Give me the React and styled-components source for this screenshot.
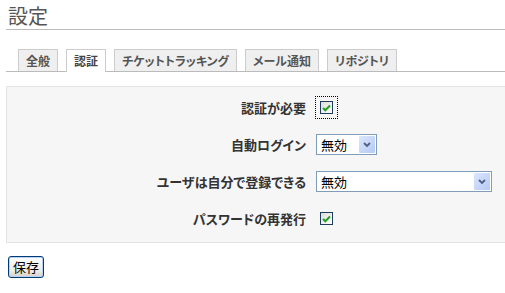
import React from "react";
import styled, { createGlobalStyle } from "styled-components";

const GlobalStyle = createGlobalStyle`
	body {
		margin: 0;
		background: #fff;
		font-family: "Noto Sans CJK JP", "DejaVu Sans", sans-serif;
		font-feature-settings: "palt";
		color: #333;
	}
`;

const Page = styled.div`
	padding: 4px 0 0 6px;
	overflow: hidden;
`;

const Title = styled.h2`
	margin: 0;
	padding: 0 0 1px 2px;
	font-size: 20px;
	line-height: 24px;
	font-weight: normal;
	color: #555;
	border-bottom: 1px solid #bbb;
`;

const TabList = styled.ul`
	display: flex;
	gap: 8px;
	list-style: none;
	margin: 19px 0 0 0;
	padding: 0 0 0 12px;
	border-bottom: 1px solid #bbb;
`;

const Tab = styled.li`
	height: 21px;
	padding: 0 7px;
	border: 1px solid #ccc;
	border-bottom: none;
	background: ${(p) => (p.$active ? "#fff" : "#efefef")};
	color: ${(p) => (p.$active ? "#444" : "#555")};
	font-size: 12px;
	font-weight: bold;
	line-height: 21px;
	margin-bottom: -1px;
	${(p) => p.$active && "padding-bottom: 1px;"}
`;

const Box = styled.div`
	margin: 14px -2px 0 0;
	padding: 2px 0 5px;
	background: #f6f6f6;
	border: 1px solid #e4e4e4;
`;

const Row = styled.div`
	display: grid;
	grid-template-columns: 299px 1fr;
	column-gap: 10px;
	align-items: center;
	height: 37px;
`;

const Label = styled.label`
	text-align: right;
	font-size: 13px;
	font-weight: bold;
	color: #333;
`;

const Control = styled.div`
	display: flex;
	align-items: center;
`;

const CheckWrap = styled.span`
	display: inline-flex;
	padding: 4px;
	outline: ${(p) => (p.$focused ? "1px dotted #000" : "none")};
`;

const CheckBox = styled.span`
	display: inline-flex;
	align-items: center;
	justify-content: center;
	width: 11px;
	height: 11px;
	border: 1px solid #1c3e5c;
	background: linear-gradient(135deg, #dcdcd7, #fff);
`;

const Select = styled.div`
	display: flex;
	align-items: center;
	justify-content: space-between;
	box-sizing: border-box;
	width: ${(p) => p.$width}px;
	height: 21px;
	border: 1px solid #7f9db9;
	background: #fff;
	padding: 1px;
	font-size: 13px;
	color: #000;
`;

const SelectText = styled.span`
	padding-left: 3px;
	line-height: 17px;
`;

const ArrowButton = styled.span`
	display: flex;
	align-items: center;
	justify-content: center;
	width: 16px;
	height: 17px;
	background: linear-gradient(135deg, #dbe6fd, #b5c9f6);
	border-radius: 1px;
`;

const SaveButton = styled.button`
	margin: 13px 0 0 2px;
	height: 22px;
	padding: 0 4px;
	font-family: "Noto Sans CJK JP", sans-serif;
	font-size: 13px;
	line-height: 18px;
	color: #000;
	border: 1px solid #003c74;
	border-radius: 3px;
	background: linear-gradient(#ffffff, #ecebe6 70%, #d6d0c5);
	box-shadow: inset 0 0 0 1px #b9d1f7;
`;

const Check = () => (
	<svg width="9" height="8" viewBox="0 0 9 8">
		<path d="M1 4 L3.3 6.3 L8 1.5" fill="none" stroke="#21a121" strokeWidth="2" />
	</svg>
);

const Chevron = () => (
	<svg width="8" height="6" viewBox="0 0 8 6">
		<path d="M1 1 L4 4 L7 1" fill="none" stroke="#4d6185" strokeWidth="1.8" />
	</svg>
);

const Checkbox = ({ focused }) => (
	<CheckWrap $focused={focused}>
		<CheckBox>
			<Check />
		</CheckBox>
	</CheckWrap>
);

const Dropdown = ({ width, value }) => (
	<Select $width={width}>
		<SelectText>{value}</SelectText>
		<ArrowButton>
			<Chevron />
		</ArrowButton>
	</Select>
);

const tabs = ["全般", "認証", "チケットトラッキング", "メール通知", "リポジトリ"];

const App = () => (
	<>
		<GlobalStyle />
		<Page>
			<Title>設定</Title>
			<TabList>
				{tabs.map((t) => (
					<Tab key={t} $active={t === "認証"}>
						{t}
					</Tab>
				))}
			</TabList>
			<Box>
				<Row>
					<Label>認証が必要</Label>
					<Control>
						<Checkbox focused />
					</Control>
				</Row>
				<Row>
					<Label>自動ログイン</Label>
					<Control>
						<Dropdown width={61} value="無効" />
					</Control>
				</Row>
				<Row>
					<Label>ユーザは自分で登録できる</Label>
					<Control>
						<Dropdown width={176} value="無効" />
					</Control>
				</Row>
				<Row>
					<Label>パスワードの再発行</Label>
					<Control>
						<Checkbox />
					</Control>
				</Row>
			</Box>
			<SaveButton>保存</SaveButton>
		</Page>
	</>
);

export default App;
